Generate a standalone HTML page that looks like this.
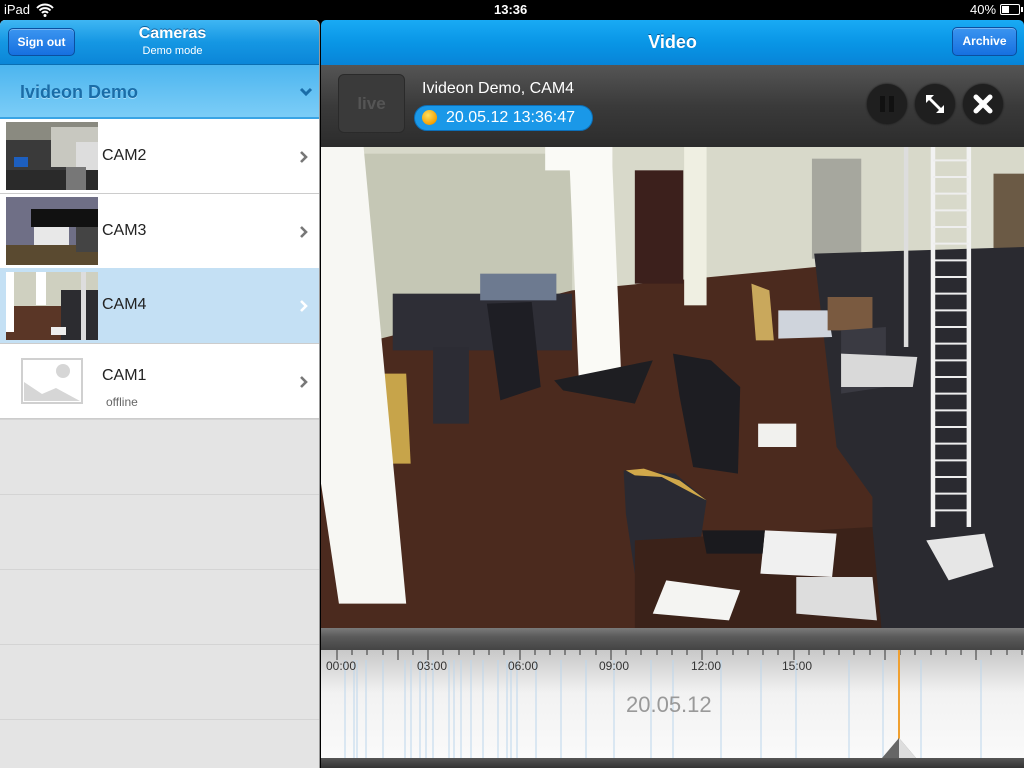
<!DOCTYPE html>
<html><head><meta charset="utf-8">
<style>
*{margin:0;padding:0;box-sizing:border-box}
body{width:1024px;height:768px;background:#000;font-family:"Liberation Sans",Arial,sans-serif;position:relative;overflow:hidden}
.abs{position:absolute}
.status{left:0;top:0;width:1024px;height:20px;background:#000;color:#fff;font-size:13px}
.lhdr{left:0;top:20px;width:319px;height:45px;background:linear-gradient(#3fb6f3,#1597e3 50%,#0b86d8);border-radius:5px 5px 0 0;border-bottom:1px solid #0a6fb3}
.btn{background:linear-gradient(#3b95f0,#1670e0);border:1px solid #0b4f9f;border-radius:5px;color:#fff;font-weight:bold;font-size:12px;text-align:center;box-shadow:inset 0 1px 0 rgba(255,255,255,.3)}
.group{left:0;top:65px;width:319px;height:54px;background:linear-gradient(#4cb5ef,#7ccdf7);border-bottom:2px solid #3aa4e4}
.row{left:0;width:319px;height:75px;background:#fff;border-bottom:1px solid #ccc}
.row .name{position:absolute;left:102px;top:28px;font-size:16px;color:#222}
.chev{position:absolute;left:299px;top:31px}
.thumb{position:absolute;left:6px;top:3px;width:92px;height:68px}
.rhdr{left:321px;top:20px;width:703px;height:45px;background:linear-gradient(#19aaf4,#0996e6 50%,#0784d8);border-radius:5px 5px 0 0}
.ctrl{left:321px;top:65px;width:703px;height:82px;background:linear-gradient(#555,#3a3a3a 50%,#2c2c2c)}
.cbtn{position:absolute;top:84px;width:40px;height:40px;border-radius:50%;background:#1f1f1f;box-shadow:0 0 2px #111}
</style></head><body>
<div class="abs status">
 <div class="abs" style="left:4px;top:2px">iPad</div>
 <svg class="abs" style="left:36px;top:3px" width="18" height="14" viewBox="0 0 18 14"><path d="M1 5a11 11 0 0 1 16 0M3.5 7.5a7.5 7.5 0 0 1 11 0M6 10a4 4 0 0 1 6 0" stroke="#fff" stroke-width="2" fill="none"/><circle cx="9" cy="12.5" r="1.5" fill="#fff"/></svg>
 <div class="abs" style="left:494px;top:2px;font-weight:bold">13:36</div>
 <div class="abs" style="left:970px;top:2px">40%</div>
 <div class="abs" style="left:1000px;top:4px;width:20px;height:11px;border:1px solid #fff;border-radius:2px"><div style="width:7px;height:7px;margin:1px;background:#fff"></div></div>
 <div class="abs" style="left:1021px;top:7px;width:2px;height:5px;background:#fff"></div>
</div>
<div class="abs" style="left:0;top:20px;width:320px;height:748px;border-right:1px solid #999;border-radius:5px 5px 0 0;background-color:#e4e4e4;background-image:repeating-linear-gradient(#e4e4e4 0,#e4e4e4 74px,#d4d4d4 74px,#d4d4d4 75px);background-position:0 25px"></div>
<div class="abs lhdr">
 <div class="abs btn" style="left:8px;top:8px;width:67px;height:28px;line-height:26px">Sign out</div>
 <div class="abs" style="left:100px;top:5px;width:145px;text-align:center;color:#fff;font-weight:bold;font-size:16px;text-shadow:0 -1px 0 #0a5e9c">Cameras</div>
 <div class="abs" style="left:100px;top:25px;width:145px;text-align:center;color:#fff;font-size:11px">Demo mode</div>
</div>
<div class="abs group">
 <div class="abs" style="left:20px;top:17px;font-size:18px;font-weight:bold;color:#1a6da8;text-shadow:0 1px 0 #a8dcfa">Ivideon Demo</div>
 <svg class="abs" style="left:299px;top:22px" width="14" height="10" viewBox="0 0 14 10"><path d="M2 2l5 5 5-5" stroke="#1a6da8" stroke-width="3" fill="none"/></svg>
</div>
<div class="abs row" style="top:119px">
 <svg class="thumb" viewBox="0 0 92 68" preserveAspectRatio="none"><rect width="92" height="68" fill="#3a3a3a"/><rect x="0" y="0" width="92" height="18" fill="#8a8a80"/><rect x="45" y="5" width="47" height="40" fill="#c8c8c0"/><rect x="70" y="20" width="22" height="48" fill="#ddd"/><rect x="8" y="35" width="14" height="10" fill="#1d5fbf"/><rect x="0" y="48" width="92" height="20" fill="#2a2a2a"/><rect x="60" y="45" width="20" height="23" fill="#777"/></svg>
 <div class="name">CAM2</div>
 <svg class="chev" width="10" height="14" viewBox="0 0 10 14"><path d="M2 2l5 5-5 5" stroke="#777" stroke-width="2.6" fill="none"/></svg>
</div>
<div class="abs row" style="top:194px">
 <svg class="thumb" viewBox="0 0 92 68" preserveAspectRatio="none"><rect width="92" height="68" fill="#6f6f86"/><rect x="25" y="12" width="67" height="18" fill="#111"/><rect x="28" y="30" width="35" height="18" fill="#e8e8e8"/><rect x="0" y="48" width="92" height="20" fill="#5a4a30"/><rect x="70" y="30" width="22" height="25" fill="#444"/></svg>
 <div class="name">CAM3</div>
 <svg class="chev" width="10" height="14" viewBox="0 0 10 14"><path d="M2 2l5 5-5 5" stroke="#777" stroke-width="2.6" fill="none"/></svg>
</div>
<div class="abs row" style="top:268px;background:#c4e0f4;height:76px">
 <svg class="thumb" style="top:4px" viewBox="0 0 92 68" preserveAspectRatio="none"><rect width="92" height="68" fill="#cfd0c0"/><rect x="0" y="34" width="92" height="34" fill="#5a3626"/><rect x="0" y="0" width="8" height="60" fill="#fff"/><rect x="30" y="0" width="10" height="33" fill="#fff"/><rect x="55" y="18" width="37" height="50" fill="#2c2c30"/><rect x="75" y="0" width="5" height="68" fill="#ddd"/><rect x="45" y="55" width="15" height="8" fill="#eee"/></svg>
 <div class="name">CAM4</div>
 <svg class="chev" width="10" height="14" viewBox="0 0 10 14"><path d="M2 2l5 5-5 5" stroke="#fff" stroke-width="2.6" fill="none"/></svg>
</div>
<div class="abs row" style="top:344px;height:75px">
 <svg class="abs" style="left:21px;top:14px" width="62" height="46" viewBox="0 0 62 46"><rect x="1" y="1" width="60" height="44" fill="#fff" stroke="#d0d0d0" stroke-width="2"/><circle cx="42" cy="13" r="7" fill="#d6d6d6"/><path d="M3 43V24l18 12 14-6 24 13z" fill="#d6d6d6"/></svg>
 <div class="name" style="top:23px">CAM1</div>
 <div class="abs" style="left:106px;top:51px;font-size:12px;color:#666">offline</div>
 <svg class="chev" width="10" height="14" viewBox="0 0 10 14"><path d="M2 2l5 5-5 5" stroke="#777" stroke-width="2.6" fill="none"/></svg>
</div>
<div class="abs rhdr">
 <div class="abs" style="left:0;top:12px;width:703px;text-align:center;color:#fff;font-weight:bold;font-size:18px;text-shadow:0 -1px 0 #075c98">Video</div>
 <div class="abs btn" style="left:631px;top:7px;width:65px;height:29px;line-height:27px">Archive</div>
</div>
<div class="abs ctrl">
 <div class="abs" style="left:17px;top:9px;width:67px;height:59px;border-radius:6px;background:#3a3a3a;border:1px solid #2a2a2a;color:#555;font-size:17px;font-weight:bold;text-align:center;line-height:57px">live</div>
 <div class="abs" style="left:101px;top:15px;color:#fff;font-size:16px">Ivideon Demo, CAM4</div>
 <div class="abs" style="left:93px;top:40px;width:179px;height:26px;border-radius:13px;background:#1a98e8;border:1px solid #0c6fb8"></div>
 <div class="abs" style="left:101px;top:45px;width:15px;height:15px;border-radius:50%;background:radial-gradient(circle at 40% 35%,#ffe060,#f5a000 70%,#b86a00)"></div>
 <div class="abs" style="left:125px;top:44px;color:#fff;font-size:16px">20.05.12 13:36:47</div>
</div>
<div class="cbtn" style="left:867px"><div class="abs" style="left:13px;top:12px;width:5px;height:16px;background:#111"></div><div class="abs" style="left:22px;top:12px;width:5px;height:16px;background:#111"></div></div>
<div class="cbtn" style="left:915px"><svg class="abs" style="left:8px;top:8px" width="24" height="24" viewBox="0 0 24 24"><path d="M3 3h8l-3 3 10 10 3-3v8h-8l3-3L6 8 3 11z" fill="#fff"/></svg></div>
<div class="cbtn" style="left:963px"><svg class="abs" style="left:9px;top:9px" width="22" height="22" viewBox="0 0 22 22"><path d="M4 4l14 14M18 4L4 18" stroke="#fff" stroke-width="5" stroke-linecap="round"/></svg></div>
<svg class="abs" style="left:321px;top:147px" width="703" height="481" viewBox="0 0 1568 1443" preserveAspectRatio="none">
 <rect width="1568" height="1443" fill="#d8d9ca"/>
 <rect x="90" y="20" width="470" height="600" fill="#c5c7b5"/>
 <polygon points="0,620 560,430 1568,300 1568,1443 0,1443" fill="#4b2a1e"/>
 <rect x="700" y="70" width="108" height="340" fill="#3c201c"/>
 <rect x="810" y="0" width="50" height="475" fill="#efefe2"/>
 <rect x="1095" y="35" width="110" height="300" fill="#a6a79e"/>
 <rect x="1500" y="80" width="68" height="260" fill="#6b5a45"/>
 <polygon points="1100,320 1568,300 1568,1443 1230,1443 1230,1050 1150,900" fill="#2a2a30"/>
 <rect x="160" y="440" width="400" height="170" fill="#2e2e36"/>
 <rect x="250" y="600" width="80" height="230" fill="#2c2c34"/>
 <rect x="355" y="380" width="170" height="80" fill="#6d7a90"/>
 <polygon points="370,470 470,465 490,720 400,760" fill="#1e1e24"/>
 <polygon points="125,680 190,680 200,950 150,950" fill="#c7a44a"/>
 <polygon points="500,0 650,0 650,60 670,700 575,700 555,70 500,70" fill="#fafaf6"/>
 <polygon points="520,700 740,640 700,770 540,730" fill="#1e1e22"/>
 <polygon points="0,0 95,0 190,1370 40,1370 0,1010" fill="#f7f7f3"/>
 <polygon points="785,620 870,640 935,720 930,980 830,960 800,750" fill="#1d1d22"/>
 <polygon points="960,410 1000,430 1010,580 970,580" fill="#c9a85c"/>
 <polygon points="1020,490 1130,490 1140,570 1020,575" fill="#cfd4dc"/>
 <polygon points="1130,450 1230,450 1230,550 1130,550" fill="#7a5a40"/>
 <polygon points="1160,550 1260,540 1260,720 1160,740" fill="#3a3a42"/>
 <polygon points="1160,620 1330,630 1320,720 1160,720" fill="#d9d9d9"/>
 <polygon points="975,830 1060,830 1060,900 975,900" fill="#f1f1ee"/>
 <polygon points="675,970 790,980 860,1060 840,1240 700,1280 680,1100" fill="#2a2a32"/>
 <polygon points="680,970 720,965 800,1000 860,1060 830,1040 760,990 700,985" fill="#d0a84a"/>
 <polygon points="700,1180 1230,1140 1250,1443 700,1443" fill="#3b2219"/>
 <polygon points="990,1150 1150,1160 1140,1290 980,1280" fill="#f0f0f0"/>
 <polygon points="770,1300 935,1330 910,1420 740,1400" fill="#f4f4f2"/>
 <polygon points="1060,1290 1230,1290 1240,1420 1060,1400" fill="#ddd"/>
 <polygon points="850,1150 990,1150 985,1220 860,1220" fill="#1a1a1e"/>
 <rect x="1360" y="0" width="10" height="1140" fill="#f2f2f2"/>
 <rect x="1440" y="0" width="10" height="1140" fill="#f2f2f2"/>
 <path d="M1365 40H1445M1365 90H1445M1365 140H1445M1365 190H1445M1365 240H1445M1365 290H1445M1365 340H1445M1365 390H1445M1365 440H1445M1365 490H1445M1365 540H1445M1365 590H1445M1365 640H1445M1365 690H1445M1365 740H1445M1365 790H1445M1365 840H1445M1365 890H1445M1365 940H1445M1365 990H1445M1365 1040H1445M1365 1090H1445" stroke="#eee" stroke-width="6"/>
 <rect x="1300" y="0" width="10" height="600" fill="#ddd"/>
 <polygon points="1350,1180 1480,1160 1500,1260 1400,1300" fill="#e6e6e6"/>
</svg>
<div class="abs" style="left:321px;top:628px;width:703px;height:22px;background:linear-gradient(#7a7a7a,#5a5a5a 40%,#444)"></div>
<div class="abs" style="left:321px;top:650px;width:703px;height:108px;background:linear-gradient(#c8c8c8,#f2f2f2 40%,#fafafa)"></div>
<svg class="abs" style="left:321px;top:650px" width="703" height="108">
 <g stroke="#bcd6ec" stroke-width="1">
  <path d="M24 10V108M33 10V108M36 10V108M45 10V108M62 10V108M84 10V108M90 10V108M99 10V108M105 10V108M112 10V108M128 10V108M133 10V108M140 10V108M150 10V108M162 10V108M177 10V108M186 10V108M190 10V108M196 10V108M215 10V108M240 10V108M265 10V108M293 10V108M330 10V108M352 10V108M400 10V108M440 10V108M475 10V108M528 10V108M562 10V108M600 10V108M660 10V108"/>
 </g>
 <g stroke="#333" stroke-width="1">
  <path d="M16 0V10M31 0V5M46 0V5M62 0V5M77 0V10M92 0V5M107 0V10M122 0V5M138 0V5M153 0V5M168 0V5M183 0V5M199 0V10M214 0V5M229 0V5M244 0V5M259 0V5M275 0V5M290 0V10M305 0V5M320 0V5M336 0V5M351 0V5M366 0V5M381 0V10M396 0V5M412 0V5M427 0V5M442 0V5M457 0V5M473 0V10M488 0V5M503 0V5M518 0V5M533 0V5M549 0V5M564 0V10M579 0V5M594 0V5M610 0V5M625 0V5M640 0V5M655 0V10M670 0V5M686 0V5M701 0V5"/>
 </g>
 <g font-family="Liberation Sans, Arial, sans-serif" font-size="12" fill="#333">
  <text x="5" y="20">00:00</text><text x="96" y="20">03:00</text><text x="187" y="20">06:00</text><text x="278" y="20">09:00</text><text x="370" y="20">12:00</text><text x="461" y="20">15:00</text>
 </g>
 <text x="305" y="62" font-family="Liberation Sans, Arial, sans-serif" font-size="22" fill="#999">20.05.12</text>
 <rect x="577" y="0" width="2" height="100" fill="#f0a030"/>
 <polygon points="578,88 561,108 595,108" fill="#666"/>
 <polygon points="578,88 578,108 595,108" fill="#ddd"/>
</svg>
<div class="abs" style="left:321px;top:758px;width:703px;height:10px;background:linear-gradient(#555,#333)"></div>
</body></html>
